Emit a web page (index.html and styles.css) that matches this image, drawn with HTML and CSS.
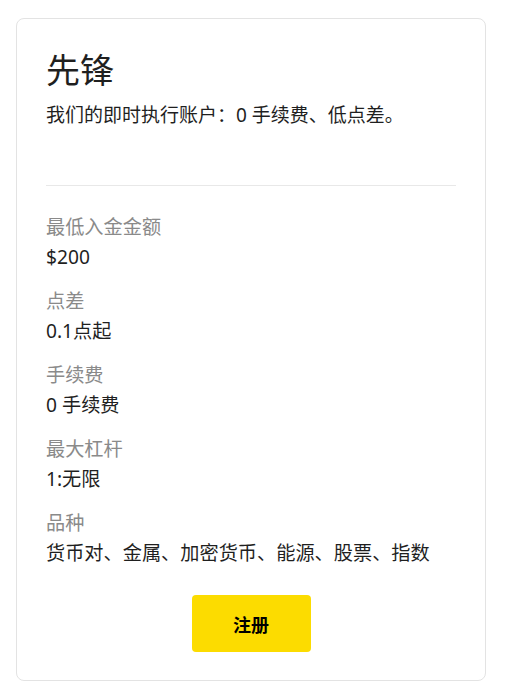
FILE: index.html
```html
<!DOCTYPE html>
<html lang="zh-CN">
<head>
    <meta charset="UTF-8">
    <meta name="viewport" content="width=device-width, initial-scale=1.0">
    <title>先锋</title>
    <link rel="stylesheet" href="styles.css">
</head>
<body>

<div class="page">
    <!-- Account card -->
    <div class="card">
        <h1 class="card-title">先锋</h1>
        <p class="card-desc">我们的即时执行账户：0 手续费、低点差。</p>

        <div class="divider"></div>

        <div class="spec">
            <div class="spec-label">最低入金金额</div>
            <div class="spec-value">$200</div>
        </div>
        <div class="spec">
            <div class="spec-label">点差</div>
            <div class="spec-value">0.1点起</div>
        </div>
        <div class="spec">
            <div class="spec-label">手续费</div>
            <div class="spec-value">0 手续费</div>
        </div>
        <div class="spec">
            <div class="spec-label">最大杠杆</div>
            <div class="spec-value">1:无限</div>
        </div>
        <div class="spec">
            <div class="spec-label">品种</div>
            <div class="spec-value">货币对、金属、加密货币、能源、股票、指数</div>
        </div>

        <div class="button-row">
            <button class="signup-button">注册</button>
        </div>
    </div>
</div>

</body>
</html>
```

FILE: styles.css
```css
:root {
    --text-color: #1f1f1f;
    --muted-color: #8a8a8a;
    --border-color: #e3e3e3;
    --accent-color: #fcdc00;
}

body {
    margin: 0;
    padding: 0;
    background-color: #fff;
    color: var(--text-color);
    font-family: "Noto Sans", "Noto Sans CJK SC", sans-serif;
}

.page {
    padding: 18px 0 0 16px;
}

.card {
    width: 470px;
    box-sizing: border-box;
    padding: 29px 29px 28px;
    border: 1px solid var(--border-color);
    border-radius: 8px;
}

.card-title {
    margin: 0;
    font-size: 34px;
    font-weight: 400;
    line-height: 44px;
}

.card-desc {
    margin: 8px 0 0;
    font-size: 19px;
    line-height: 30px;
}

.divider {
    height: 1px;
    margin-top: 55px;
    margin-bottom: 26px;
    background-color: #e8e8e8;
}

.spec {
    margin-bottom: 14px;
}

.spec-label {
    font-size: 19.2px;
    line-height: 30px;
    color: var(--muted-color);
}

.spec-value {
    font-size: 19.2px;
    line-height: 30px;
}

.button-row {
    display: flex;
    justify-content: center;
    padding-top: 13px;
}

.signup-button {
    width: 119px;
    height: 57px;
    border: none;
    border-radius: 4px;
    background-color: var(--accent-color);
    color: #000;
    font-family: "Noto Sans", "Noto Sans CJK SC", sans-serif;
    font-size: 18px;
    font-weight: 700;
    cursor: pointer;
}
```
